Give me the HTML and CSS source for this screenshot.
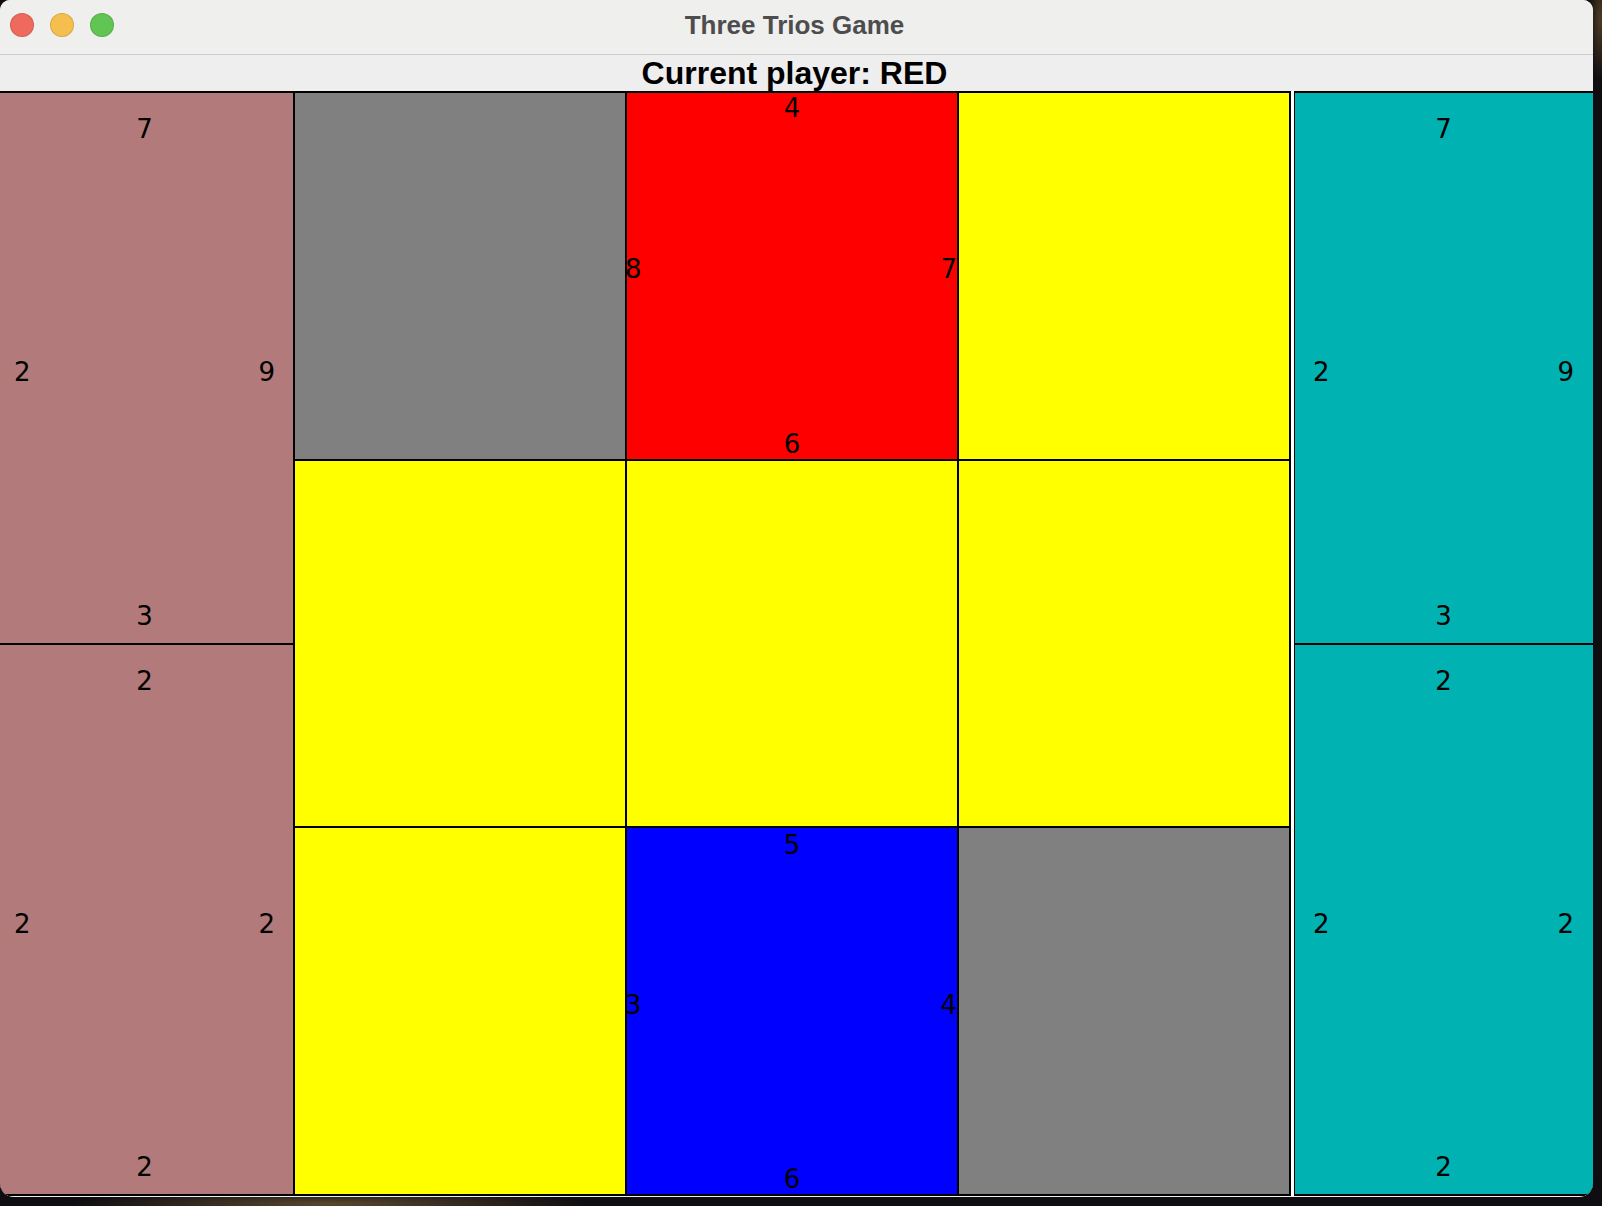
FILE: index.html
```html
<!DOCTYPE html>
<html lang="en">
<head>
    <meta charset="UTF-8">
    <meta name="viewport" content="width=device-width, initial-scale=1.0">
    <title>Three Trios Game</title>
    <link rel="stylesheet" href="styles.css">
</head>
<body>
    <div class="window">
        <!-- Title Bar -->
        <div class="titlebar">
            <div class="lights">
                <span class="light close"></span>
                <span class="light minimize"></span>
                <span class="light zoom"></span>
            </div>
            <div class="title">Three Trios Game</div>
            <div></div>
        </div>

        <!-- Current Player -->
        <div class="status">Current player: RED</div>

        <!-- Game Area -->
        <div class="game">
            <!-- Red hand -->
            <div class="hand hand-red">
                <div class="card">
                    <div class="north">7</div>
                    <div class="middle"><span>2</span><span>9</span></div>
                    <div class="south">3</div>
                </div>
                <div class="card">
                    <div class="north">2</div>
                    <div class="middle"><span>2</span><span>2</span></div>
                    <div class="south">2</div>
                </div>
            </div>

            <!-- Board -->
            <div class="board">
                <div class="cell hole"></div>
                <div class="cell red">
                    <div class="north">4</div>
                    <div class="middle"><span>8</span><span>7</span></div>
                    <div class="south">6</div>
                </div>
                <div class="cell empty"></div>

                <div class="cell empty"></div>
                <div class="cell empty"></div>
                <div class="cell empty"></div>

                <div class="cell empty"></div>
                <div class="cell blue">
                    <div class="north">5</div>
                    <div class="middle"><span>3</span><span>4</span></div>
                    <div class="south">6</div>
                </div>
                <div class="cell hole"></div>
            </div>

            <!-- Blue hand -->
            <div class="hand hand-blue">
                <div class="card">
                    <div class="north">7</div>
                    <div class="middle"><span>2</span><span>9</span></div>
                    <div class="south">3</div>
                </div>
                <div class="card">
                    <div class="north">2</div>
                    <div class="middle"><span>2</span><span>2</span></div>
                    <div class="south">2</div>
                </div>
            </div>
        </div>
    </div>
</body>
</html>
```

FILE: styles.css
```css
/* Global Styles */
body {
    margin: 0;
    width: 1602px;
    height: 1206px;
    overflow: hidden;
    background-color: #0f0d11;
    background-image:
        radial-gradient(ellipse 260px 14px at 330px 1204px, rgba(150, 120, 70, 0.55), transparent),
        radial-gradient(ellipse 12px 60px at 1600px 20px, rgba(120, 90, 50, 0.6), transparent);
    font-family: "DejaVu Sans", "Liberation Sans", sans-serif;
}

/* Window */
.window {
    width: 1593px;
    height: 1197px;
    background-color: #eeeeee;
    border-radius: 10px 10px 14px 14px;
    overflow: hidden;
    display: flex;
    flex-direction: column;
}

/* Title Bar */
.titlebar {
    height: 54px;
    flex-shrink: 0;
    background-color: #efefed;
    border-bottom: 1px solid #cbcbcb;
    display: grid;
    grid-template-columns: 1fr auto 1fr;
    align-items: center;
}

.lights {
    display: flex;
    gap: 16px;
    padding-left: 10px;
    padding-bottom: 4px;
}

.light {
    width: 22px;
    height: 22px;
    border-radius: 50%;
    border: 1px solid rgba(0, 0, 0, 0.12);
}

.close {
    background-color: #ee6a5e;
}

.minimize {
    background-color: #f5bf4f;
}

.zoom {
    background-color: #61c554;
}

.title {
    font-family: "Liberation Sans", Arial, sans-serif;
    font-weight: bold;
    font-size: 26px;
    line-height: 50px;
    height: 54px;
    color: #4d4d4d;
    padding-right: 4px;
}

/* Status */
.status {
    height: 36px;
    flex-shrink: 0;
    font-family: "Liberation Sans", Arial, sans-serif;
    font-weight: bold;
    font-size: 32px;
    line-height: 37px;
    text-align: center;
    color: #000;
    padding-right: 4px;
}

/* Game Area */
.game {
    height: 1105px;
    flex-shrink: 0;
    display: flex;
    background-color: #fff;
}

.hand {
    background-color: #000;
    display: grid;
    grid-template-rows: 1fr 1fr;
    gap: 2px;
    padding: 2px 0;
}

.hand-red {
    width: 293px;
}

.hand-blue {
    width: 298px;
    padding-left: 1px;
}

.card {
    display: flex;
    flex-direction: column;
    justify-content: space-between;
    padding: 21px 18px 12px 14px;
}

.hand-red .card {
    background-color: #b27a7a;
}

.hand-blue .card {
    background-color: #00b2b2;
    padding-left: 18px;
    padding-right: 19px;
}

/* Board */
.board {
    width: 994px;
    margin-right: 3px;
    background-color: #000;
    padding: 2px;
    display: grid;
    grid-template-columns: repeat(3, 1fr);
    grid-template-rows: repeat(3, 1fr);
    gap: 2px;
}

.cell {
    display: flex;
    flex-direction: column;
    justify-content: space-between;
}

.cell .middle {
    margin-bottom: 14px;
}

.cell .middle span:first-child {
    margin-left: -2px;
}

.blue .north {
    padding-top: 2px;
}

.hole {
    background-color: #808080;
}

.empty {
    background-color: #ffff00;
}

.red {
    background-color: #ff0000;
}

.blue {
    background-color: #0000ff;
}

/* Card values */
.north,
.south,
.middle {
    font-size: 26px;
    line-height: 30px;
    color: #000;
}

.north,
.south {
    text-align: center;
}

.middle {
    display: flex;
    justify-content: space-between;
}
```
